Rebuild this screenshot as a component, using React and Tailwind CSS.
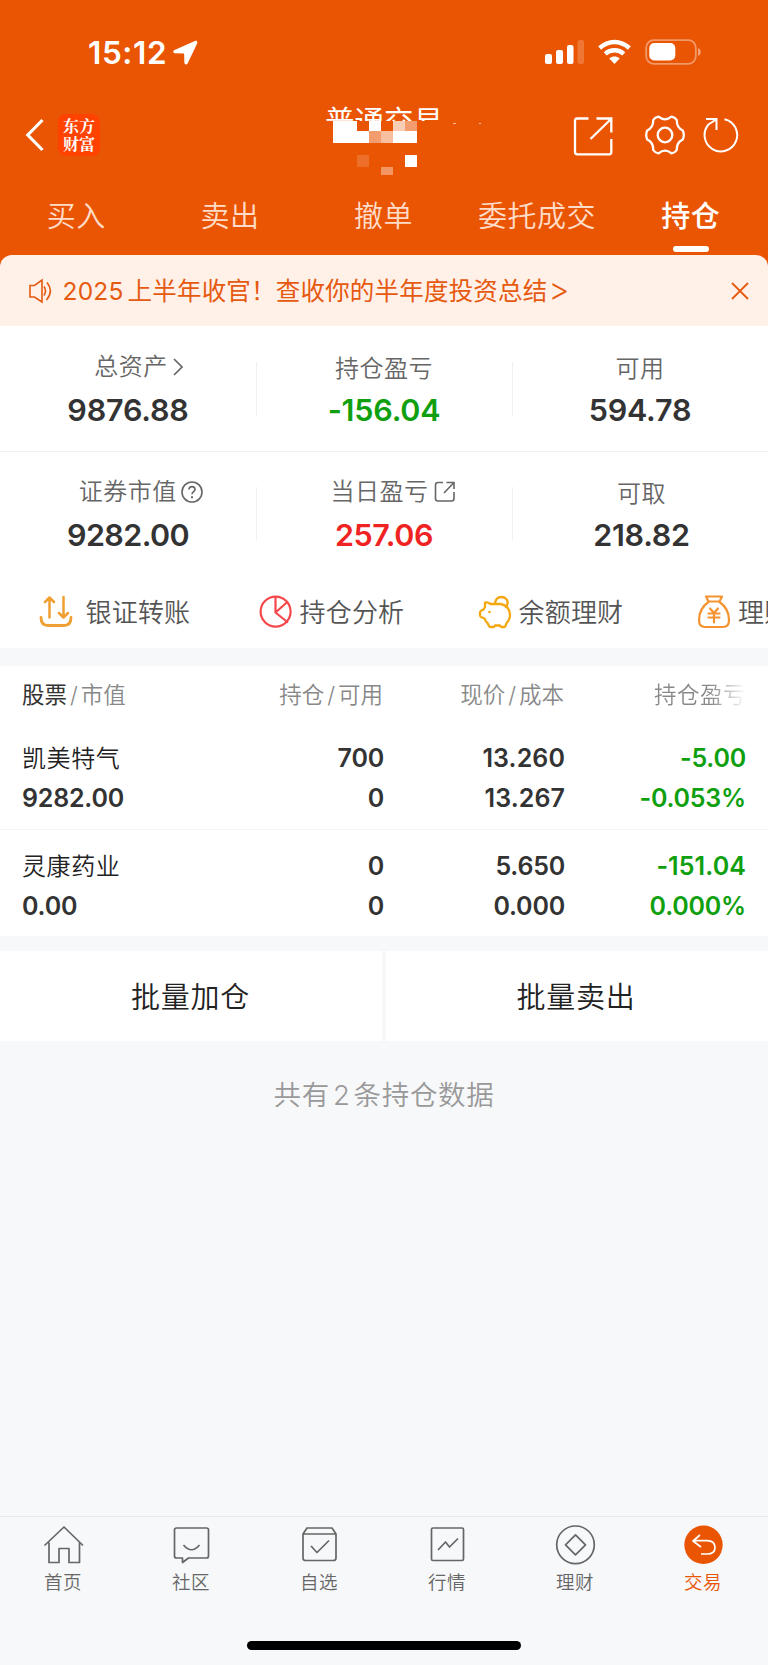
import React from "react";

const FONT = "font-['Inter','Noto_Sans_CJK_SC',sans-serif]";

const tabs = ["买入", "卖出", "撤单", "委托成交", "持仓"];

const mosaic = [
  [333, 121, 24, 10, 1],
  [369, 121, 12, 10, 1],
  [393, 121, 12, 10, 0.7],
  [405, 121, 12, 10, 0.42],
  [333, 131, 36, 12, 1],
  [369, 131, 12, 12, 0.42],
  [381, 131, 12, 12, 0.62],
  [393, 131, 24, 12, 1],
  [357, 155, 12, 12, 0.15],
  [405, 155, 12, 12, 1],
  [381, 167, 12, 8, 0.38],
];

function StatusBar() {
  return (
    <div className="flex h-[104px] items-start justify-between pl-[88px] pr-[67px] pt-[39px] text-white">
      <div className="flex items-start">
        <span className="w-[85px] whitespace-nowrap text-[31.5px] font-semibold leading-[27px] tracking-[0.6px]">15:12</span>
        <svg width="25" height="26" viewBox="0 0 26 26" className="mt-px" fill="currentColor">
          <path d="M22.8.5 1.6 9.9c-2 .9-1.500 3.300.5 3.400l9 .2c.3 0 .5.2.5.500l.2 9c.1 2.200 2.700 2.500 3.500.6L25.100 3C25.800 1.200 24.600-.2 22.800.5Z" />
        </svg>
      </div>
      <svg width="156" height="26" viewBox="0 0 156 26" fill="none">
        <g fill="#fff">
          <rect x="0" y="15" width="7" height="10" rx="2" />
          <rect x="11" y="11" width="7" height="14" rx="2" />
          <rect x="22" y="6" width="6.500" height="19" rx="2" />
          <rect x="32.500" y="1" width="6.500" height="24" rx="2" opacity=".2" />
        </g>
        <g stroke="#fff" strokeWidth="4.400">
          <path d="M54.600 9C63.500.900 75.500.900 84.400 9" />
          <path d="M60.200 14.800C65.500 10 73.500 10 78.800 14.800" />
        </g>
        <path d="M64.300 19.400C67.500 16.900 71.500 16.900 74.700 19.400L69.500 25Z" fill="#fff" />
        <rect x="101.200" y="1.200" width="49.600" height="23.600" rx="7.500" stroke="#fff" strokeOpacity=".4" strokeWidth="1.800" />
        <rect x="104.300" y="4" width="26" height="17.500" rx="5" fill="#fff" />
        <path d="M153 9v8c1.800-.7 2.800-2.200 2.800-4s-1-3.300-2.800-4Z" fill="#fff" fillOpacity=".45" />
      </svg>
    </div>
  );
}

function TitleBar() {
  return (
    <div className="relative flex h-[72px] items-start text-white">
      <svg width="20" height="34" viewBox="0 0 20 34" className="ml-[25px] mt-[14px]" fill="none" stroke="currentColor" strokeWidth="3.200">
        <path d="M17.500 2 2.800 17l14.700 15" />
      </svg>
      <div className="ml-[13px] mt-[10px] flex h-[42px] w-[42px] flex-col items-center justify-center rounded-[8px] bg-[#ff4200] font-['Noto_Serif_CJK_SC','Noto_Sans_CJK_SC',serif] text-[16px] font-bold leading-[18px]">
        <span>东方</span>
        <span>财富</span>
      </div>
      <div className="ml-[225px] mt-[-1px] h-[18px] w-[120px] overflow-hidden whitespace-nowrap text-[29.500px] leading-[36px]">普通交易</div>
      <svg width="190" height="90" viewBox="310 95 190 90" className="absolute left-[310px] top-[-9px]" shapeRendering="crispEdges">
        {mosaic.map(([x, y, w, h, o]) => (
          <rect key={x + "-" + y} x={x} y={y} width={w} height={h} fill="#fff" fillOpacity={o} />
        ))}
        <path d="M453 123h3v1h-3zM477 124h2v-1h2v1z" fill="#fff" fillOpacity=".6" />
      </svg>
      <svg width="40" height="40" viewBox="0 0 40 40" className="ml-[128px] mt-[12px]" fill="none" stroke="currentColor" strokeWidth="2.300">
        <path d="M15.500 2.500H4Q2 2.500 2 5v31q0 2.300 2.300 2.300h32q2 0 2-2.300V23" />
        <path d="M23.500 2.500h14.800v14M38 3 17.500 23" />
      </svg>
      <svg width="42" height="42" viewBox="-21 -21 42 42" className="ml-[31px] mt-[10px]" fill="none" stroke="currentColor" strokeWidth="2.300" strokeLinejoin="round">
        <circle r="7.300" />
        <path d="M-6.500-18.300Q0-13 6.500-18.300Q10-17.800 11.800-15C11.500-9 13.500-6.500 17.800-4.500Q19.800 0 17.800 4.500C13.500 6.500 11.500 9 11.800 15Q10 17.800 6.500 18.300Q0 13-6.500 18.300Q-10 17.800-11.800 15C-11.500 9-13.500 6.500-17.800 4.500Q-19.800 0-17.800-4.500C-13.500-6.500-11.500-9-11.800-15Q-10-17.800-6.500-18.300Z" />
      </svg>
      <svg width="38" height="38" viewBox="-19 -19 38 38" className="ml-[16px] mt-[12px]" fill="none" stroke="currentColor" strokeWidth="2">
        <path d="M3.500-15.800A16.300 16.300 0 1 1-12.500-10.500L-4.800-15.500M-15-16H-4.500V-5" />
      </svg>
    </div>
  );
}

function Tabs() {
  return (
    <div className="grid h-[79px] grid-cols-5">
      {tabs.map((t, i) => (
        <div
          key={t}
          className={
            "flex flex-col items-center pt-[22px] text-[29px] leading-[38px] tracking-[0.5px] " +
            (i === 4 ? "font-medium text-white" : "font-[350] text-[#ffdcc8]")
          }
        >
          <span className="mr-px">{t}</span>
          {i === 4 && <div className="mt-[10px] h-[5.500px] w-[36px] rounded-full bg-white" />}
        </div>
      ))}
    </div>
  );
}

function Banner() {
  return (
    <div className="flex h-[71px] items-center rounded-t-[12px] bg-[#fff0e8] text-[#e65a10]">
      <svg width="25" height="26" viewBox="0 0 25 26" className="ml-[28px]" fill="none" stroke="currentColor" strokeWidth="1.600">
        <path d="M2 7.500H6.500L14 2V24L6.500 19H2Z" />
        <path d="M16 8.500Q19 13 16 17.500M19 4.500Q26 13 18.500 22" />
      </svg>
      <span className="ml-[9.500px] grow whitespace-nowrap text-[24.500px] leading-[34px] tracking-[0.200px]">
        <span className="mr-[4px]">2025</span>上半年收官！查收你的半年度投资总结
        <span className="ml-px inline-block h-[34px] align-top text-[32px] font-light leading-[32px]">&gt;</span>
      </span>
      <svg width="20" height="20" viewBox="0 0 20 20" className="mr-[18px]" fill="none" stroke="currentColor" strokeWidth="1.800">
        <path d="m2 2 16 16M18 2 2 18" />
      </svg>
    </div>
  );
}

const Chevron = () => (
  <svg width="12" height="18" viewBox="0 0 12 18" className="ml-[4px]" fill="none" stroke="currentColor" strokeWidth="1.700">
    <path d="m2 1 8 8-8 8" />
  </svg>
);

const Question = () => (
  <svg width="22" height="22" viewBox="0 0 22 22" className="ml-[4.500px]" fill="none" stroke="currentColor" strokeWidth="1.600">
    <circle cx="11" cy="11" r="10" />
    <path d="M8 8.600Q8 5.600 11 5.600T14 8.500C14 10.600 11 10.700 11 13.200" />
    <path d="M11 15.200v2" strokeWidth="2" />
  </svg>
);

const OutLink = () => (
  <svg width="22" height="22" viewBox="0 0 22 22" className="ml-[5px]" fill="none" stroke="currentColor" strokeWidth="1.600">
    <path d="M9 1.500H4Q1.500 1.500 1.500 4v13.500Q1.500 20 4 20h13.500q2.500 0 2.500-2.500V11M12.500 1.500H20V8M20 1.500 10 12" />
  </svg>
);

function Stat({ label, value, icon, color, divider, drop, pad = "", shift = "tracking-[-0.200px]" }) {
  return (
    <div className="relative flex flex-col items-center">
      <div
        className={
          "flex h-[30px] items-center whitespace-nowrap text-[24px] font-[350] tracking-[0.500px] text-[#666] " +
          (drop ? "mt-[28px] " : "mt-[26px] ") +
          pad
        }
      >
        {label}
        {icon}
      </div>
      <div className={"mt-auto mb-[22px] text-[30.500px] font-semibold leading-[38px] " + color + " " + shift}>{value}</div>
      {divider && <div className="absolute -right-px top-[36px] h-[54px] w-px bg-[#f0f0f0]" />}
    </div>
  );
}

const sw = { fill: "none", strokeLinecap: "round", strokeLinejoin: "round" };

const TransferIcon = () => (
  <svg width="34" height="34" viewBox="0 0 34 34" {...sw} stroke="#f0a032" strokeWidth="2.500">
    <path d="M10.500 22.500V3M6 7l4.500-4.500L15 7M24.500 2v20M20 18l4.500 4.500L29 18" />
    <path d="M2 22.500Q2 30.500 9 30.500H25Q32 30.500 32 22.500" strokeWidth="2.800" />
  </svg>
);

const PieIcon = () => (
  <svg width="34" height="34" viewBox="0 0 34 34" {...sw} stroke="#f5484d" strokeWidth="2.200">
    <circle cx="16.600" cy="16.600" r="15" />
    <path d="M16.500 2V17.500L28.300 27M16.500 17.500 28.300 7" />
  </svg>
);

const PigIcon = () => (
  <svg width="34" height="34" viewBox="0 0 34 34" {...sw} stroke="#f5a70f" strokeWidth="2.300">
    <path d="M7 7.500C9 7 11 7.800 12.500 9H23C28.500 10 32 14.500 32 19.500Q32 25 28.500 28L27.500 31Q27 32 26 32H23.500Q22.500 32 22 30.500H17Q16.500 32 15.500 32H12.500Q11.500 32 11 31L9.500 28Q7.500 26.500 6.500 23.500L3 22Q2 21.500 2 20V17.500Q2 16.500 3.500 15.500L5.500 14.500 7 12Z" />
    <path d="M17 8.500C17.500 4 20 2 23.500 2S30.500 5 29.500 9L28 12" />
    <circle cx="11.500" cy="17" r=".6" fill="#f5a70f" strokeWidth="1.400" />
  </svg>
);

const BagIcon = () => (
  <svg width="34" height="34" viewBox="0 0 34 34" {...sw} stroke="#f49330" strokeWidth="2.200">
    <path d="M9 1.500H25L22.500 6.500H11.500ZM11.500 7C5 11.500 2 17 2 25Q2 32 8 32H26Q32 32 32 25C32 17 29 11.500 22.500 7" />
    <path d="m13 13.500 4 4.500 4-4.500M11.500 18.500h11M11.500 22.500h11M17 18v9.500" />
  </svg>
);

function QuickActions() {
  const items = [
    ["银证转账", <TransferIcon />, "ml-[39px] w-[220px]", "ml-[12.500px]"],
    ["持仓分析", <PieIcon />, "w-[219px]", "ml-[6.500px]"],
    ["余额理财", <PigIcon />, "w-[219px]", "ml-[6.500px]"],
    ["理财", <BagIcon />, "w-[120px]", "ml-[7px]"],
  ];
  return (
    <div className="flex h-[72px] items-start overflow-hidden">
      {items.map(([t, icon, cls, gap]) => (
        <div key={t} className={"flex shrink-0 items-start pt-[19px] " + cls}>
          {icon}
          <span className={"whitespace-nowrap pt-px text-[26px] font-[350] leading-[34px] tracking-[0.200px] text-[#555] " + gap}>{t}</span>
        </div>
      ))}
    </div>
  );
}

const cols = "grid grid-cols-[212px_149px_181px_182px] pl-[22px]";

const spacing = (v) => (v.includes("1") ? "tracking-[0.100px]" : "tracking-[-0.200px]");

function Holding({ name, value, a, b, c, d, e, f }) {
  const pair = (x, y, cls) => (
    <div className={"flex flex-col text-right " + cls}>
      <span className={spacing(x)}>{x}</span>
      <span className={spacing(y)}>{y}</span>
    </div>
  );
  return (
    <div className={cols + " text-[25px] font-semibold leading-[40px] tracking-[-0.200px] text-[#333]"}>
      <div className="flex flex-col">
        <span className="h-[40px] pt-px text-[24px] font-[350] tracking-[0.600px] text-[#222]">{name}</span>
        <span>{value}</span>
      </div>
      {pair(a, b, "-mr-px")}
      {pair(c, d, "-mr-px")}
      {pair(e, f, "text-[#0f9f0f]")}
    </div>
  );
}

const navIcons = {
  home: <path d="M1.500 20.500 21 2l19 18.500M6 17.500v20H16V23.500h10V37.500H36.500V17.500" />,
  chat: (
    <>
      <path d="M5.500 3H35.500Q37.500 3 37.500 5V31Q37.500 33 35.500 33H17.500L11.500 37.500V33H5.500Q3.500 33 3.500 31V5Q3.500 3 5.500 3Z" />
      <path d="M12.500 20Q20.500 29.500 28.500 20" />
    </>
  ),
  pick: (
    <>
      <path d="M4 9 8 3H33L37 9V33Q37 35.500 34.500 35.500H6.500Q4 35.500 4 33ZM4 9H37" />
      <path d="m12 21 6 6.500L30 15.500" />
    </>
  ),
  market: (
    <>
      <rect x="4.500" y="3" width="32" height="32.500" rx="1.500" />
      <path d="m11 25 7.500-8 4 5 8.500-8.500" />
    </>
  ),
  wealth: (
    <>
      <circle cx="20.500" cy="19.800" r="18.800" />
      <path d="m20.500 9.800 10 10-10 10-10-10Z" />
    </>
  ),
  trade: (
    <>
      <circle cx="20.500" cy="19.800" r="19.200" fill="#ea5504" stroke="none" />
      <path d="M17 10 10 16l8 6M10 15.700H24Q32 16 32 22.500T24 29H18" stroke="#fff" />
    </>
  ),
};

const nav = [
  ["首页", "home"],
  ["社区", "chat"],
  ["自选", "pick"],
  ["行情", "market"],
  ["理财", "wealth"],
  ["交易", "trade"],
];

export default function App() {
  return (
    <div className={"flex h-[1665px] w-[768px] flex-col overflow-hidden bg-[#f7f8fa] " + FONT}>
      <header className="bg-[#ea5504]">
        <StatusBar />
        <TitleBar />
        <Tabs />
        <Banner />
      </header>

      <section className="bg-white">
        <div className="grid h-[126px] grid-cols-3 border-b border-[#f0f0f0]">
          <Stat label="总资产" value="9876.88" icon={<Chevron />} color="text-[#333]" pad="pl-[22px]" divider />
          <Stat label="持仓盈亏" value="-156.04" color="text-[#0f9f0f]" divider drop />
          <Stat label="可用" value="594.78" color="text-[#333]" drop />
        </div>
        <div className="-mt-px grid h-[125px] grid-cols-3">
          <Stat label="证券市值" value="9282.00" icon={<Question />} color="text-[#333]" pad="pl-[26px]" shift="tracking-[-0.600px]" divider />
          <Stat label="当日盈亏" value="257.06" icon={<OutLink />} color="text-[#f02323]" pad="pl-[18px]" shift="tracking-[-0.400px]" divider />
          <Stat label="可取" value="218.82" color="text-[#333]" pad="pl-[3px]" shift="tracking-[-0.300px] pl-[3px]" drop />
        </div>
        <QuickActions />
      </section>

      <section className="mt-[18px] bg-white">
        <div className={cols + " h-[72px] pt-[12px] text-[22.500px] font-[350] leading-[34px] text-[#888]"}>
          <span><span className="font-normal text-[#333]">股票</span><span className="mx-[3px]">/</span>市值</span>
          <span className="text-right">持仓<span className="mx-[3px]">/</span>可用</span>
          <span className="text-right">现价<span className="mx-[3px]">/</span>成本</span>
          <span className="bg-linear-to-r from-[#888] from-80% to-white to-100% bg-clip-text text-right tracking-[0.500px] text-transparent">持仓盈亏</span>
        </div>
        <div className="h-[92px] border-b border-[#f2f3f5]">
          <Holding name="凯美特气" value="9282.00" a="700" b="0" c="13.260" d="13.267" e="-5.00" f="-0.053%" />
        </div>
        <div className="h-[106px] pt-[15.500px]">
          <Holding name="灵康药业" value="0.00" a="0" b="0" c="5.650" d="0.000" e="-151.04" f="0.000%" />
        </div>
      </section>

      <div className="mt-[15px] grid h-[90px] grid-cols-2 gap-[4px] text-[29px] font-[350] leading-[87px] tracking-[0.700px] text-[#222]">
        <div className="bg-white pr-px pt-[3px] text-center">批量加仓</div>
        <div className="bg-white pr-[2px] pt-[3px] text-center">批量卖出</div>
      </div>

      <p className="mt-[34px] text-center text-[27.500px] font-[350] leading-[40px] tracking-[0.700px] text-[#999]">
        共有<span className="mx-[3px]">2</span>条持仓数据
      </p>

      <nav className="mt-auto h-[149px] border-t border-[#e8e9ec]">
        <div className="-ml-px grid w-[768px] grid-cols-6">
          {nav.map(([t, k], i) => (
            <div key={t} className={"flex flex-col items-center pt-[8px] " + (i === 5 ? "text-[#ea5504]" : "text-[#666]")}>
              <svg width="41" height="40" viewBox="0 0 41 40" fill="none" stroke="currentColor" strokeWidth="1.700" strokeLinejoin="round">
                {navIcons[k]}
              </svg>
              <span className="mt-[4px] text-[18.500px] font-[350] leading-[26px] tracking-[0.500px]">{t}</span>
            </div>
          ))}
        </div>
        <div className="mx-auto mt-[46px] h-[9px] w-[274px] rounded-full bg-black" />
      </nav>
    </div>
  );
}
